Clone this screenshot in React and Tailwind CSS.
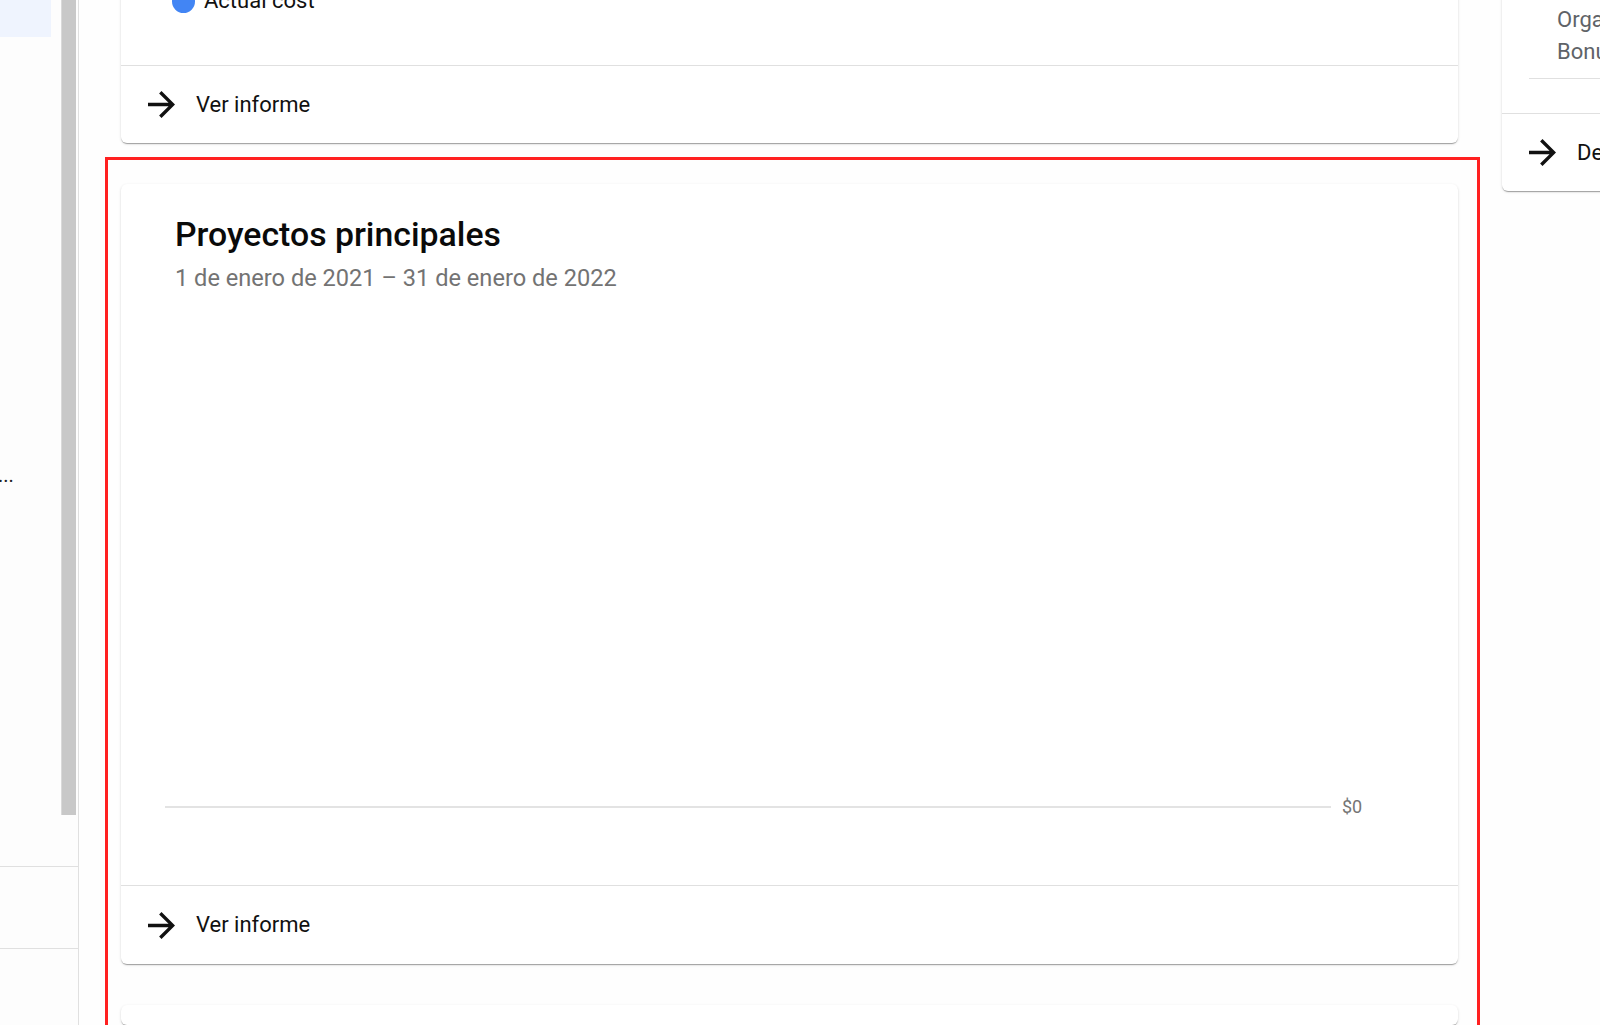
const ArrowForward = () => (
    <svg width="27" height="27" viewBox="4 4 16 16" className="shrink-0">
        <path d="M12 4l-1.41 1.41L16.17 11H4v2h12.17l-5.58 5.59L12 20l8-8z" fill="#111" />
    </svg>
);

const cardClass = "bg-white rounded-[6px] shadow-[0_2px_1px_-1px_rgba(0,0,0,0.2),0_1px_1px_0_rgba(0,0,0,0.14),0_1px_3px_0_rgba(0,0,0,0.12)]";

const Footer = ({ label, h = 'h-[78px]' }) => (
    <div className={`${h} border-t border-[#e0e0e0] flex items-center pl-[27px] gap-[21px]`}>
        <ArrowForward />
        <span className="text-[22px] leading-[24px] text-[#111]">{label}</span>
    </div>
);

const App = () => {
    return (
        <div className="relative w-[1600px] h-[1025px] overflow-hidden flex bg-white font-['Roboto','Liberation_Sans',sans-serif]">
            {/* barra lateral */}
            <div className="w-[79px] shrink-0 border-r border-[#e0e0e0] flex flex-col bg-[#fdfdfd]">
                <div className="h-[815px] flex">
                    <div className="w-[61px] flex flex-col">
                        <div className="w-[51px] h-[37px] bg-[#eff4fe]" />
                        <div className="mt-[426px] text-[20px] leading-[24px] text-[#202124] -ml-[2px]">...</div>
                    </div>
                    <div className="w-[15px] bg-[#c8c8c8] border-l border-[#d9d9d9]" />
                </div>
                <div className="h-[51px]" />
                <div className="h-[82px] border-t border-[#e0e0e0]" />
                <div className="flex-1 border-t border-[#e0e0e0]" />
            </div>

            {/* contenido */}
            <div className="flex-1 flex pl-[42px] bg-[#fefefe]">
                <div className="w-[1337px] shrink-0 flex flex-col gap-[41px]">
                    <div className={`-mt-[35px] ${cardClass}`}>
                        <div className="h-[100px] pt-[24px] pl-[51px]">
                            <div className="flex items-center gap-[9px] h-[24px]">
                                <span className="w-[23px] h-[23px] rounded-full bg-[#4285f4]" />
                                <span className="text-[22px] leading-[24px] text-[#111]">Actual cost</span>
                            </div>
                        </div>
                        <Footer label="Ver informe" />
                    </div>

                    <div className={cardClass}>
                        <div className="h-[701px]">
                            <div className="pt-[31px] pl-[54px]">
                                <h3 className="text-[33.8px] leading-[40px] font-medium text-[#0a0a0a]">Proyectos principales</h3>
                                <p className="mt-[7px] text-[23.6px] leading-[32px] text-[#737373]">1 de enero de 2021 – 31 de enero de 2022</p>
                            </div>
                            <div className="mt-[501px] ml-[44px] h-[24px] flex items-center">
                                <div className="w-[1166px] h-[2px] bg-[#e3e3e3]" />
                                <span className="ml-[11px] text-[18px] leading-[24px] text-[#757575]">$0</span>
                            </div>
                        </div>
                        <Footer label="Ver informe" h="h-[79px]" />
                    </div>

                    <div className={`${cardClass} h-[200px]`} />
                </div>

                <div className="ml-[44px] w-[400px] shrink-0">
                    <div className={`-mt-[40px] ${cardClass}`}>
                        <div className="pt-[44px]">
                            <div className="pl-[55px] text-[22px] leading-[32px] text-[#5f6368] whitespace-nowrap">
                                <div>Organización</div>
                                <div>Bonus</div>
                            </div>
                            <div className="ml-[27px] mt-[10px] h-px bg-[#e0e0e0]" />
                            <div className="h-[34px]" />
                        </div>
                        <div className="h-[78px] border-t border-[#e0e0e0] flex items-center pl-[27px] gap-[21px]">
                            <ArrowForward />
                            <span className="text-[22px] leading-[24px] text-[#111] whitespace-nowrap">Detalles de facturación</span>
                        </div>
                    </div>
                </div>
            </div>

            {/* marco rojo */}
            <div className="absolute left-[105px] top-[157px] w-[1375px] h-[900px] border-[3px] border-[#ff2020] pointer-events-none" />
        </div>
    );
};

export default App;
